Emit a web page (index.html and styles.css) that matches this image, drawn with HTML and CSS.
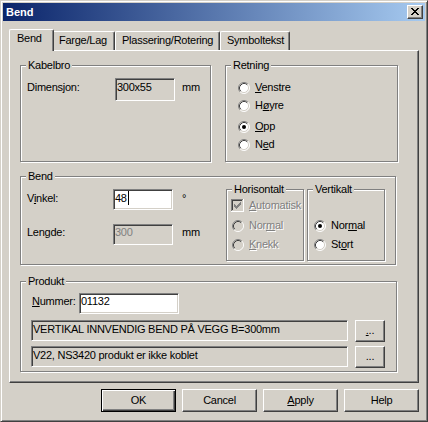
FILE: index.html
```html
<!DOCTYPE html>
<html>
<head>
<meta charset="utf-8">
<title>Bend</title>
<link rel="stylesheet" href="styles.css">
</head>
<body>
<div class="window">
  <div class="titlebar">
    <span class="title">Bend</span>
    <span class="close"><svg width="8" height="7" viewBox="0 0 8 7" shape-rendering="crispEdges"><path fill="#000" d="M0 0h2v1H0z M6 0h2v1H6z M1 1h2v1H1z M5 1h2v1H5z M2 2h4v1H2z M3 3h2v1H3z M2 4h4v1H2z M1 5h2v1H1z M5 5h2v1H5z M0 6h2v1H0z M6 6h2v1H6z"/></svg></span>
  </div>
  <div class="client">
    <div class="tabs">
      <div class="tab tab-sel w-bend">Bend</div>
      <div class="tab w-farge">Farge/Lag</div>
      <div class="tab w-plass">Plassering/Rotering</div>
      <div class="tab w-symbol">Symboltekst</div>
    </div>
    <div class="panel">
      <div class="row1">
        <div class="group g-kabel">
          <div class="gtitle">Kabelbro</div>
          <div class="field f-dim">
            <span class="lbl lbl-dim">Dimensjon:</span>
            <span class="edit ro e-dim">300x55</span>
            <span class="unit u-dim">mm</span>
          </div>
        </div>
        <div class="group g-retning">
          <div class="gtitle">Retning</div>
          <div class="radio r-ret r1">
            <svg class="rb" width="12" height="12" viewBox="0 0 12 12"><circle cx="6" cy="6" r="5" fill="#fff"/><path d="M2.11 9.89A5.5 5.5 0 0 1 9.89 2.11" fill="none" stroke="#808080"/><path d="M2.82 9.18A4.5 4.5 0 0 1 9.18 2.82" fill="none" stroke="#404040"/><path d="M9.89 2.11A5.5 5.5 0 0 1 2.11 9.89" fill="none" stroke="#fff"/><path d="M9.18 2.82A4.5 4.5 0 0 1 2.82 9.18" fill="none" stroke="#d4d0c8"/></svg>
            <span class="rtext"><u>V</u>enstre</span>
          </div>
          <div class="radio r-ret r2">
            <svg class="rb" width="12" height="12" viewBox="0 0 12 12"><circle cx="6" cy="6" r="5" fill="#fff"/><path d="M2.11 9.89A5.5 5.5 0 0 1 9.89 2.11" fill="none" stroke="#808080"/><path d="M2.82 9.18A4.5 4.5 0 0 1 9.18 2.82" fill="none" stroke="#404040"/><path d="M9.89 2.11A5.5 5.5 0 0 1 2.11 9.89" fill="none" stroke="#fff"/><path d="M9.18 2.82A4.5 4.5 0 0 1 2.82 9.18" fill="none" stroke="#d4d0c8"/></svg>
            <span class="rtext">H<u>ø</u>yre</span>
          </div>
          <div class="radio r-ret r3">
            <svg class="rb" width="12" height="12" viewBox="0 0 12 12"><circle cx="6" cy="6" r="5" fill="#fff"/><path d="M2.11 9.89A5.5 5.5 0 0 1 9.89 2.11" fill="none" stroke="#808080"/><path d="M2.82 9.18A4.5 4.5 0 0 1 9.18 2.82" fill="none" stroke="#404040"/><path d="M9.89 2.11A5.5 5.5 0 0 1 2.11 9.89" fill="none" stroke="#fff"/><path d="M9.18 2.82A4.5 4.5 0 0 1 2.82 9.18" fill="none" stroke="#d4d0c8"/><circle cx="6" cy="6" r="2" fill="#000"/></svg>
            <span class="rtext"><u>O</u>pp</span>
          </div>
          <div class="radio r-ret r4">
            <svg class="rb" width="12" height="12" viewBox="0 0 12 12"><circle cx="6" cy="6" r="5" fill="#fff"/><path d="M2.11 9.89A5.5 5.5 0 0 1 9.89 2.11" fill="none" stroke="#808080"/><path d="M2.82 9.18A4.5 4.5 0 0 1 9.18 2.82" fill="none" stroke="#404040"/><path d="M9.89 2.11A5.5 5.5 0 0 1 2.11 9.89" fill="none" stroke="#fff"/><path d="M9.18 2.82A4.5 4.5 0 0 1 2.82 9.18" fill="none" stroke="#d4d0c8"/></svg>
            <span class="rtext">N<u>e</u>d</span>
          </div>
        </div>
      </div>

      <div class="group g-bend">
        <div class="gtitle">Bend</div>
        <div class="bend-body">
          <div class="bend-left">
            <div class="field f-vinkel">
              <span class="lbl lbl-b">V<u>i</u>nkel:</span>
              <span class="edit e-b">48<span class="caret"></span></span>
              <span class="unit u-b">°</span>
            </div>
            <div class="field f-lengde">
              <span class="lbl lbl-b">Lengde:</span>
              <span class="edit ro e-b dis-edit">300</span>
              <span class="unit u-b">mm</span>
            </div>
          </div>
          <div class="group sub g-hor">
            <div class="gtitle">Horisontalt</div>
            <div class="check c-auto">
              <svg width="13" height="13" viewBox="0 0 13 13" shape-rendering="crispEdges"><rect x="0" y="0" width="13" height="13" fill="#fff"/><path d="M0 0h12v1H1v11H0z" fill="#808080"/><path d="M1 1h10v1H2v9H1z" fill="#404040"/><path d="M11 1h1v11H1v-1h10z" fill="#d4d0c8"/><rect x="2" y="2" width="9" height="9" fill="#d4d0c8"/><path fill="#808080" d="M9 3h1v1H9z M8 4h2v1H8z M3 5h1v1H3z M7 5h3v1H7z M3 6h2v1H3z M6 6h3v1H6z M3 7h5v1H3z M4 8h3v1H4z M5 9h1v1H5z"/></svg>
              <span class="ctext dis"><u>A</u>utomatisk</span>
            </div>
            <div class="radio r-hor rh1">
              <svg class="rb" width="12" height="12" viewBox="0 0 12 12"><circle cx="6" cy="6" r="5" fill="#d4d0c8"/><path d="M2.11 9.89A5.5 5.5 0 0 1 9.89 2.11" fill="none" stroke="#808080"/><path d="M2.82 9.18A4.5 4.5 0 0 1 9.18 2.82" fill="none" stroke="#404040"/><path d="M9.89 2.11A5.5 5.5 0 0 1 2.11 9.89" fill="none" stroke="#fff"/><path d="M9.18 2.82A4.5 4.5 0 0 1 2.82 9.18" fill="none" stroke="#d4d0c8"/></svg>
              <span class="rtext dis">Nor<u>m</u>al</span>
            </div>
            <div class="radio r-hor rh2">
              <svg class="rb" width="12" height="12" viewBox="0 0 12 12"><circle cx="6" cy="6" r="5" fill="#d4d0c8"/><path d="M2.11 9.89A5.5 5.5 0 0 1 9.89 2.11" fill="none" stroke="#808080"/><path d="M2.82 9.18A4.5 4.5 0 0 1 9.18 2.82" fill="none" stroke="#404040"/><path d="M9.89 2.11A5.5 5.5 0 0 1 2.11 9.89" fill="none" stroke="#fff"/><path d="M9.18 2.82A4.5 4.5 0 0 1 2.82 9.18" fill="none" stroke="#d4d0c8"/></svg>
              <span class="rtext dis"><u>K</u>nekk</span>
            </div>
          </div>
          <div class="group sub g-vert">
            <div class="gtitle">Vertikalt</div>
            <div class="radio r-vert rv1">
              <svg class="rb" width="12" height="12" viewBox="0 0 12 12"><circle cx="6" cy="6" r="5" fill="#fff"/><path d="M2.11 9.89A5.5 5.5 0 0 1 9.89 2.11" fill="none" stroke="#808080"/><path d="M2.82 9.18A4.5 4.5 0 0 1 9.18 2.82" fill="none" stroke="#404040"/><path d="M9.89 2.11A5.5 5.5 0 0 1 2.11 9.89" fill="none" stroke="#fff"/><path d="M9.18 2.82A4.5 4.5 0 0 1 2.82 9.18" fill="none" stroke="#d4d0c8"/><circle cx="6" cy="6" r="2" fill="#000"/></svg>
              <span class="rtext">Nor<u>m</u>al</span>
            </div>
            <div class="radio r-vert rv2">
              <svg class="rb" width="12" height="12" viewBox="0 0 12 12"><circle cx="6" cy="6" r="5" fill="#fff"/><path d="M2.11 9.89A5.5 5.5 0 0 1 9.89 2.11" fill="none" stroke="#808080"/><path d="M2.82 9.18A4.5 4.5 0 0 1 9.18 2.82" fill="none" stroke="#404040"/><path d="M9.89 2.11A5.5 5.5 0 0 1 2.11 9.89" fill="none" stroke="#fff"/><path d="M9.18 2.82A4.5 4.5 0 0 1 2.82 9.18" fill="none" stroke="#d4d0c8"/></svg>
              <span class="rtext">St<u>o</u>rt</span>
            </div>
          </div>
        </div>
      </div>

      <div class="group g-produkt">
        <div class="gtitle">Produkt</div>
        <div class="field f-num">
          <span class="lbl lbl-num"><u>N</u>ummer:</span>
          <span class="edit e-num">01132</span>
        </div>
        <div class="f-desc fd1">
          <span class="edit ro e-desc">VERTIKAL INNVENDIG BEND PÅ VEGG B=300mm</span>
          <span class="btn btn-dots"><span><u>.</u>..</span></span>
        </div>
        <div class="f-desc fd2">
          <span class="edit ro e-desc">V22, NS3420 produkt er ikke koblet</span>
          <span class="btn btn-dots"><span>...</span></span>
        </div>
      </div>
    </div>
    <div class="buttons">
      <span class="btn btn-main btn-default">OK</span>
      <span class="btn btn-main">Cancel</span>
      <span class="btn btn-main"><span><u>A</u>pply</span></span>
      <span class="btn btn-main">Help</span>
    </div>
  </div>
</div>
</body>
</html>
```

FILE: styles.css
```css
* { box-sizing: border-box; }
html, body { margin: 0; padding: 0; }
body {
  width: 428px;
  height: 422px;
  overflow: hidden;
  background: #d4d0c8;
  font-family: "Liberation Sans", Arial, sans-serif;
  font-size: 11px;
  line-height: 13px;
  letter-spacing: -0.25px;
  color: #000;
}
u { text-underline-offset: 1px; }

.window {
  width: 428px;
  height: 422px;
  background: #d4d0c8;
  border: 1px solid;
  border-color: #d4d0c8 #404040 #404040 #d4d0c8;
  box-shadow: inset 1px 1px #fff, inset -1px -1px #808080;
  padding: 2px;
  display: flex;
  flex-direction: column;
}

.titlebar {
  height: 18px;
  display: flex;
  align-items: center;
  background: linear-gradient(to right, #0a246a, #a6caf0);
  padding: 0 2px 0 3px;
}
.title { flex: 1; color: #fff; font-weight: bold; line-height: 18px; letter-spacing: 0; }
.close {
  width: 16px;
  height: 14px;
  background: #d4d0c8;
  border: 1px solid;
  border-color: #fff #404040 #404040 #fff;
  box-shadow: inset -1px -1px #808080;
  display: flex;
  align-items: center;
  justify-content: center;
  padding: 0 1px 1px 0;
}
.close svg { display: block; }

.client { padding: 8px 6px 0 6px; }

.tabs {
  display: flex;
  align-items: flex-end;
  height: 21px;
  padding-left: 2px;
}
.tab {
  height: 19px;
  border-top: 1px solid #fff;
  border-left: 1px solid #fff;
  border-right: 1px solid #404040;
  box-shadow: inset -1px 0 #808080;
  border-radius: 2px 2px 0 0;
  padding: 2px 0 0 6px;
  background: #d4d0c8;
  white-space: nowrap;
}
.tab-sel {
  height: 22px;
  margin: 0 -2px -1px -2px;
  padding-left: 7px;
  position: relative;
  z-index: 1;
}
.w-bend { width: 45px; }
.w-farge { width: 63px; }
.w-plass { width: 105px; }
.w-symbol { width: 70px; }

.panel {
  height: 333px;
  border: 1px solid;
  border-color: #fff #404040 #404040 #fff;
  box-shadow: inset -1px -1px #808080;
  padding: 14px 0 0 10px;
  display: flex;
  flex-direction: column;
}

.row1 { display: flex; }
.group {
  border: 1px solid #808080;
  box-shadow: inset 1px 1px #fff, 1px 1px #fff;
}
.gtitle {
  width: max-content;
  height: 13px;
  margin: -7px 0 0 5px;
  padding: 0 2px;
  background: #d4d0c8;
  white-space: nowrap;
}
.g-kabel { width: 191px; height: 97px; }
.g-retning { width: 173px; height: 97px; margin-left: 14px; }
.g-bend { width: 376px; height: 89px; margin-top: 14px; }
.g-produkt { width: 377px; height: 91px; margin-top: 16px; }

.field { display: flex; align-items: baseline; }
.lbl { white-space: nowrap; flex: none; }
.unit { white-space: nowrap; }

.edit {
  display: block;
  flex: none;
  height: 21px;
  border: 1px solid;
  border-color: #808080 #fff #fff #808080;
  box-shadow: inset 1px 1px #404040, inset -1px -1px #d4d0c8;
  padding: 1px 0 0 1px;
  background: #fff;
  white-space: nowrap;
  overflow: hidden;
}
.edit.ro { background: #d4d0c8; }
.dis-edit { color: #808080; }
.caret {
  display: inline-block;
  width: 1px;
  height: 14px;
  margin-left: 1px;
  background: #000;
  vertical-align: -3px;
}

.f-dim { margin-top: 6px; padding-left: 6px; }
.lbl-dim { width: 88px; }
.e-dim { width: 60px; height: 23px; padding-top: 2px; }
.u-dim { margin-left: 7px; }

.radio { display: flex; align-items: center; height: 13px; white-space: nowrap; }
.rb { display: block; flex: none; margin-right: 5px; }
.r-ret { padding-left: 12px; }
.r1 { margin-top: 9px; }
.r2 { margin-top: 5px; }
.r3 { margin-top: 8px; }
.r4 { margin-top: 5px; }

.dis { color: #808080; text-shadow: 1px 1px #fff; }

.bend-body { display: flex; }
.bend-left { width: 205px; padding-left: 6px; }
.f-vinkel { margin-top: 6px; }
.f-lengde { margin-top: 14px; }
.lbl-b { width: 86px; }
.e-b { width: 60px; }
.u-b { margin-left: 9px; }

.sub { width: 78px; height: 72px; margin-top: 6px; flex: none; }
.g-vert { margin-left: 3px; }
.check { display: flex; align-items: center; height: 13px; margin-top: 3px; padding-left: 4px; white-space: nowrap; }
.check svg { display: block; flex: none; margin-right: 5px; }
.r-hor { padding-left: 5px; }
.rh1 { margin-top: 7px; }
.rh2 { margin-top: 6px; }
.r-vert { padding-left: 6px; }
.rv1 { margin-top: 23px; }
.rv2 { margin-top: 6px; }

.f-num { margin-top: 5px; padding-left: 11px; }
.lbl-num { width: 47px; }
.e-num { width: 100px; }
.f-desc { display: flex; align-items: flex-start; padding-left: 10px; }
.fd1 { margin-top: 6px; }
.fd2 { margin-top: 4px; }
.e-desc { width: 317px; padding-top: 2px; }

.btn {
  display: flex;
  align-items: center;
  justify-content: center;
  background: #d4d0c8;
  border: 1px solid;
  border-color: #fff #404040 #404040 #fff;
  box-shadow: inset -1px -1px #808080;
  white-space: nowrap;
  flex: none;
}
.btn-dots { width: 30px; height: 22px; margin-left: 7px; padding-bottom: 1px; }
.buttons {
  display: flex;
  justify-content: flex-end;
  gap: 6px;
  margin-top: 6px;
}
.btn-main { width: 75px; height: 23px; }
.btn-default {
  border-color: #000;
  box-shadow: inset 1px 1px #fff, inset -1px -1px #404040, inset -2px -2px #808080;
}
```
